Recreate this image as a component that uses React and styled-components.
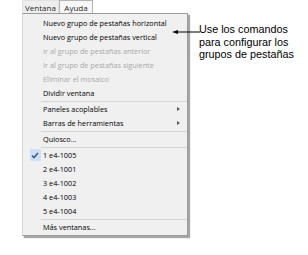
import React from "react";
import styled, { createGlobalStyle } from "styled-components";

const GlobalStyle = createGlobalStyle`
  html, body {
    margin: 0;
    padding: 0;
    background: #ffffff;
  }
  body {
    width: 308px;
    height: 255px;
    overflow: hidden;
  }
`;

const items = [
  { label: "Nuevo grupo de pestañas horizontal" },
  { label: "Nuevo grupo de pestañas vertical" },
  { label: "Ir al grupo de pestañas anterior", disabled: true },
  { label: "Ir al grupo de pestañas siguiente", disabled: true },
  { label: "Eliminar el mosaico", disabled: true },
  { label: "Dividir ventana" },
  { sep: true },
  { label: "Paneles acoplables", sub: true },
  { label: "Barras de herramientas", sub: true },
  { sep: true },
  { label: "Quiosco..." },
  { sep: true },
  { label: "1 e4-1005", checked: true },
  { label: "2 e4-1001" },
  { label: "3 e4-1002" },
  { label: "4 e4-1003" },
  { label: "5 e4-1004" },
  { sep: true },
  { label: "Más ventanas..." },
];

function Check() {
  return (
    <svg width="8" height="7" viewBox="0 0 8 7">
      <path d="M1 3.6 L3 5.6 L7 1" fill="none" stroke="#3c5a80" strokeWidth="1.5" />
    </svg>
  );
}

function App() {
  return (
    <Page>
      <GlobalStyle />
      <Left>
        <MenuBar>
          <Tab $open>Ventana</Tab>
          <Tab>Ayuda</Tab>
        </MenuBar>
        <Menu>
          {items.map((it, i) =>
            it.sep ? (
              <Separator key={i} />
            ) : (
              <Item key={i} $disabled={it.disabled}>
                <Gutter>{it.checked && <CheckBox><Check /></CheckBox>}</Gutter>
                <Label>{it.label}</Label>
                {it.sub && <SubArrow />}
              </Item>
            )
          )}
        </Menu>
      </Left>
      <Callout>
        <svg width="28" height="12" viewBox="0 0 28 12">
          <path d="M0 6 L6 4 L6 8 Z" fill="#000" />
          <line x1="5" y1="6" x2="28" y2="6" stroke="#000" strokeWidth="1" />
        </svg>
        <Note>
          Use los comandos
          <br />
          para configurar los
          <br />
          grupos de pestañas
        </Note>
      </Callout>
    </Page>
  );
}

export default App;

const Page = styled.div`
  display: flex;
  align-items: flex-start;
  padding-left: 22px;
`;

const Left = styled.div`
  display: flex;
  flex-direction: column;
  width: 166px;
`;

const MenuBar = styled.div`
  display: flex;
  height: 13px;
  font-family: "Open Sans", "Liberation Sans", sans-serif;
  font-size: 8px;
  color: #1e1e1e;
`;

const Tab = styled.div`
  display: flex;
  align-items: center;
  padding: 0 4px;
  box-sizing: border-box;
  height: 14px;
  width: ${(p) => (p.$open ? "37px" : "34px")};
  background: ${(p) => (p.$open ? "#eeeeee" : "#f7f7f7")};
  border: 1px solid ${(p) => (p.$open ? "#e2e2e2" : "#b4b4b4")};
  border-bottom: none;
  justify-content: center;
`;

const Menu = styled.div`
  box-sizing: border-box;
  background: #f0f0f0;
  border: 1px solid #9a9a9a;
  border-left-color: #d8d8d8;
  padding: 2px 0 1px;
  box-shadow: 2px 2px 1px rgba(0, 0, 0, 0.35);
  font-family: "Open Sans", "Liberation Sans", sans-serif;
  font-size: 7.3px;
`;

const Item = styled.div`
  display: flex;
  align-items: center;
  height: 14px;
  color: ${(p) => (p.$disabled ? "#a8a8a8" : "#000000")};
`;

const Gutter = styled.div`
  width: 20px;
  height: 14px;
  display: flex;
  align-items: center;
  justify-content: center;
  flex: none;
`;

const CheckBox = styled.div`
  width: 11px;
  height: 12px;
  margin-left: 4px;
  background: #cfe0f4;
  border-radius: 1px;
  display: flex;
  align-items: center;
  justify-content: center;
`;

const Label = styled.span`
  flex: 1;
  white-space: nowrap;
`;

const SubArrow = styled.span`
  width: 0;
  height: 0;
  margin-right: 7px;
  border-top: 2.5px solid transparent;
  border-bottom: 2.5px solid transparent;
  border-left: 3px solid #555;
`;

const Separator = styled.div`
  height: 2px;
  margin-left: 18px;
  display: flex;
  align-items: center;
  &::after {
    content: "";
    flex: 1;
    height: 1px;
    background: #d6d6d6;
  }
`;

const Callout = styled.div`
  display: flex;
  align-items: flex-start;
  margin-left: -16px;
  margin-top: 26px;
`;

const Note = styled.div`
  margin-top: -3px;
  margin-left: -1px;
  font-family: "Liberation Sans", Arial, sans-serif;
  font-size: 10.8px;
  line-height: 12.7px;
  color: #000;
`;
